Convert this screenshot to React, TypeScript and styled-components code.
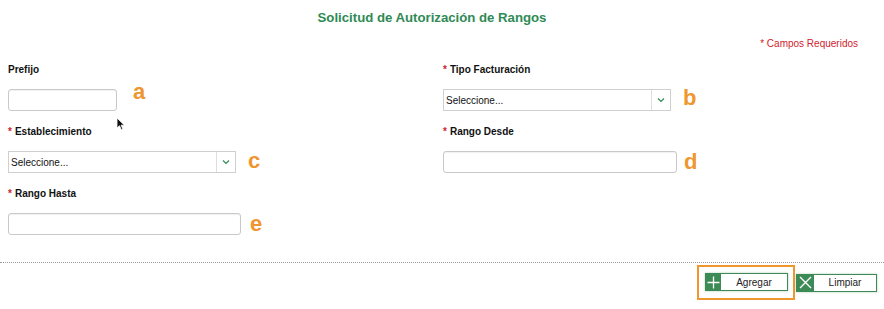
import React from "react";
import styled, { createGlobalStyle } from "styled-components";

const GlobalStyle = createGlobalStyle`
  body {
    margin: 0;
    background: #fff;
    font-family: "Liberation Sans", Arial, sans-serif;
  }
`;

const Page = styled.div`
  position: relative;
  width: 884px;
  height: 309px;
  overflow: hidden;
`;

const Title = styled.h1`
  width: 864px;
  margin: 0;
  padding-top: 10px;
  height: 25px;
  text-align: center;
  font-size: 13.2px;
  font-weight: bold;
  color: #2f8a55;
`;

const Required = styled.div`
  width: 858px;
  text-align: right;
  font-size: 10px;
  color: #d0222e;
  height: 14px;
  line-height: 14px;
  margin-top: 2px;
`;

const FormGrid = styled.div`
  display: grid;
  grid-template-columns: 435px 1fr;
  padding-left: 8px;
  margin-top: 13px;
`;

const Cell = styled.div`
  height: 62px;
  display: flex;
  flex-direction: column;
`;

const Label = styled.label`
  font-size: 10px;
  font-weight: bold;
  color: #111;
  height: 12px;
  line-height: 12px;
  margin-bottom: 13px;
`;

const Star = styled.span`
  color: #d0222e;
  margin-right: 3px;
`;

const FieldRow = styled.div`
  display: flex;
  align-items: flex-end;
`;

const TextInput = styled.div<{ $w: number }>`
  width: ${({ $w }) => $w}px;
  height: 22px;
  box-sizing: border-box;
  border: 1px solid #c9c9c9;
  border-radius: 3px;
  background: #fff;
  box-shadow: inset 0 1px 1px rgba(0, 0, 0, 0.06);
`;

const Select = styled.div<{ $w: number }>`
  width: ${({ $w }) => $w}px;
  height: 22px;
  box-sizing: border-box;
  border: 1px solid #cfcfcf;
  display: flex;
  align-items: center;
  background: #fff;
`;

const SelectText = styled.span`
  flex: 1;
  font-size: 10px;
  color: #111;
  padding-left: 2px;
`;

const Arrow = styled.span`
  width: 18px;
  height: 100%;
  border-left: 1px solid #dedede;
  display: flex;
  align-items: center;
  justify-content: center;
`;

const Letter = styled.span<{ $lift?: number; $gap: number }>`
  font-size: 22px;
  font-weight: bold;
  color: #f0962e;
  line-height: 22px;
  margin-left: ${({ $gap }) => $gap}px;
  position: relative;
  top: ${({ $lift }) => ($lift ? -$lift : 0)}px;
`;

const Divider = styled.div`
  margin-top: 12px;
  border-top: 1px dotted #9a9a9a;
`;

const Actions = styled.div`
  display: flex;
  justify-content: flex-end;
  align-items: center;
  gap: 1px;
  padding-right: 7px;
  margin-top: 2px;
`;

const Highlight = styled.div`
  border: 2px solid #f0962e;
  padding: 6px 5px 7px 6px;
  display: flex;
`;

const Button = styled.button<{ $w: number; $icon: number }>`
  width: ${({ $w }) => $w}px;
  height: 18px;
  padding: 0;
  display: flex;
  align-items: stretch;
  border: 1px solid #3c8a55;
  background: #fff;
  box-shadow: 0 0 2px rgba(60, 138, 85, 0.45);
  font-family: "Liberation Sans", Arial, sans-serif;
  font-size: 10px;
  color: #222;
  cursor: pointer;

  & > i {
    width: ${({ $icon }) => $icon}px;
    background: #3c8a55;
    display: flex;
    align-items: center;
    justify-content: center;
  }

  & > span {
    flex: 1;
    display: flex;
    align-items: center;
    justify-content: center;
  }
`;

const Cursor = styled.svg`
  position: absolute;
  left: 116px;
  top: 117px;
`;

const Chevron = () => (
  <svg width="8" height="6" viewBox="0 0 8 6">
    <path d="M1 1.5 L4 4.5 L7 1.5" fill="none" stroke="#2f8a55" strokeWidth="1.2" />
  </svg>
);

export default function App() {
  return (
    <Page>
      <GlobalStyle />
      <Title>Solicitud de Autorización de Rangos</Title>
      <Required>* Campos Requeridos</Required>
      <FormGrid>
        <Cell>
          <Label>Prefijo</Label>
          <FieldRow>
            <TextInput $w={109} />
            <Letter $gap={16} $lift={8}>a</Letter>
          </FieldRow>
        </Cell>
        <Cell>
          <Label>
            <Star>*</Star>Tipo Facturación
          </Label>
          <FieldRow>
            <Select $w={228}>
              <SelectText>Seleccione...</SelectText>
              <Arrow>
                <Chevron />
              </Arrow>
            </Select>
            <Letter $gap={12} $lift={2}>b</Letter>
          </FieldRow>
        </Cell>
        <Cell>
          <Label>
            <Star>*</Star>Establecimiento
          </Label>
          <FieldRow>
            <Select $w={228}>
              <SelectText>Seleccione...</SelectText>
              <Arrow>
                <Chevron />
              </Arrow>
            </Select>
            <Letter $gap={12} $lift={1}>c</Letter>
          </FieldRow>
        </Cell>
        <Cell>
          <Label>
            <Star>*</Star>Rango Desde
          </Label>
          <FieldRow>
            <TextInput $w={234} />
            <Letter $gap={7}>d</Letter>
          </FieldRow>
        </Cell>
        <Cell>
          <Label>
            <Star>*</Star>Rango Hasta
          </Label>
          <FieldRow>
            <TextInput $w={233} />
            <Letter $gap={9}>e</Letter>
          </FieldRow>
        </Cell>
      </FormGrid>
      <Divider />
      <Actions>
        <Highlight>
          <Button $w={83} $icon={15}>
            <i>
              <svg width="13" height="13" viewBox="0 0 13 13">
                <path d="M6.5 0.5 V12.5 M0.5 6.5 H12.5" stroke="#fff" strokeWidth="1.3" />
              </svg>
            </i>
            <span>Agregar</span>
          </Button>
        </Highlight>
        <Button $w={81} $icon={17}>
          <i>
            <svg width="13" height="13" viewBox="0 0 13 13">
              <path d="M1 1 L12 12 M12 1 L1 12" stroke="#fff" strokeWidth="1.4" />
            </svg>
          </i>
          <span>Limpiar</span>
        </Button>
      </Actions>
      <Cursor width="10" height="14" viewBox="0 0 10 14">
        <path d="M1 1 L1 11 L3.5 8.7 L5.4 12.8 L6.9 12.1 L5.1 8.2 L8.4 8.2 Z" fill="#111" stroke="#fff" strokeWidth="0.8" />
      </Cursor>
    </Page>
  );
}
